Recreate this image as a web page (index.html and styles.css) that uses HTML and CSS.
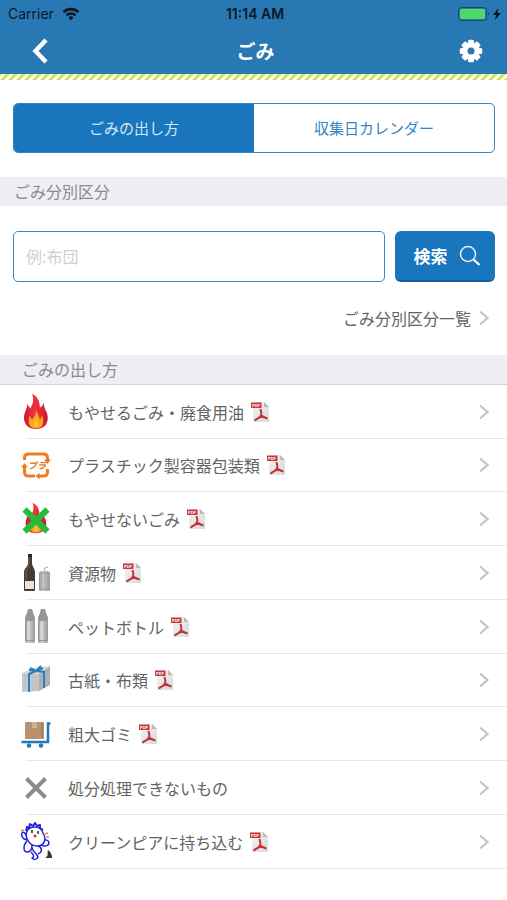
FILE: index.html
```html
<!DOCTYPE html>
<html lang="ja">
<head>
<meta charset="utf-8">
<meta name="viewport" content="width=device-width, initial-scale=1">
<title>ごみ</title>
<link rel="stylesheet" href="styles.css">
</head>
<body>
<svg class="defs" aria-hidden="true">
  <defs>
    <linearGradient id="page" x1="0" y1="0" x2="1" y2="1"><stop offset="0" stop-color="#f4f4f4"/><stop offset="1" stop-color="#d8d9db"/></linearGradient>
    <linearGradient id="steel" x1="0" x2="1" y1="0" y2="0"><stop offset="0" stop-color="#8f8f8f"/><stop offset=".35" stop-color="#d2d2d2"/><stop offset="1" stop-color="#979797"/></linearGradient>
    <linearGradient id="flame-red" x1="0" x2="1" y1="0" y2="0"><stop offset="0" stop-color="#cf1736"/><stop offset=".45" stop-color="#ee3340"/><stop offset="1" stop-color="#cb1735"/></linearGradient>
  </defs>
  <symbol id="chevron" viewBox="0 0 10 16"><path d="M1 1.500l7.500 6.500L1 14.500" fill="none" stroke="#c4c4c6" stroke-width="2.200"/></symbol>
  <symbol id="pdf" viewBox="0 0 20 22">
    <path d="M3 1h11l5 5v15H3z" fill="url(#page)"/>
    <path d="M14 1l5 5h-5z" fill="#b9babd"/>
    <path d="M1 1.500h10.500v5.500H1z" fill="#c9373b"/>
    <path d="M10.500 8c1 3 1 5 .5 6.500-1.500 2-3.500 4-6.500 5M11 14.500c2 1 4 2.500 6.500 3" fill="none" stroke="#c23237" stroke-width="2"/>
    <path d="M5 19.500c1-3 8-4 12-2" fill="none" stroke="#c23237" stroke-width="1.200"/>
  </symbol>
  <symbol id="flame" viewBox="0 0 28 38">
    <path d="M10 1c5 2 8 7 8 14 2-1 3-2 4-5 0 4 1 6 3 10 2 5 1 11-2 14-3 2-5 3-9 3s-7-1-9-3c-4-4-4-10-2-15 1-3 2-4 2-8 1 2 2 3 3 5 3-5 4-9 2-15z" fill="url(#flame-red)"/>
    <path d="M14 18c2 3 3 6 4 9 1-1 2-3 2-5 2 5 2 9 0 12-2 3-10 3-12 0-2-3-2-8 0-11 0 2 1 3 2 4 3-3 4-5 4-9z" fill="#f5a51e"/>
    <path d="M14 25c2 4 4 7 1 10-3 1-5-1-4-4 1-2 3-3 3-6z" fill="#fbb936"/>
  </symbol>
</svg>

<header class="top">
  <div class="status">
    <div class="carrier">Carrier
      <svg width="18" height="14" viewBox="0 0 18 14" aria-hidden="true"><g fill="none" stroke="#0b1826" stroke-width="2.6"><path d="M1.5 5.2a10.6 10.6 0 0 1 15 0"/><path d="M4.5 8.4a6.4 6.4 0 0 1 9 0"/></g><path d="M9 13.2L6.4 10.5a3.7 3.7 0 0 1 5.2 0z" fill="#0b1826"/></svg>
    </div>
    <div class="clock">11:14 AM</div>
    <div class="battery">
      <svg width="44" height="14" viewBox="0 0 44 14" aria-hidden="true"><rect x=".5" y=".5" width="28" height="13" rx="3" fill="none" stroke="#17496f"/><rect x="2" y="2" width="25" height="10" rx="1.5" fill="#4cd964"/><path d="M30 5q2 2 0 4z" fill="#17496f"/><path d="M40.5 1L35 8h3.2L37 13l6-7h-3.5z" fill="#071421"/></svg>
    </div>
  </div>
  <div class="nav">
    <button class="nav-btn" type="button" aria-label="戻る"><svg width="18" height="28" viewBox="0 0 18 28"><path d="M15 3L4.500 14 15 25" fill="none" stroke="#fff" stroke-width="4.500"/></svg></button>
    <h1>ごみ</h1>
    <button class="nav-btn" type="button" aria-label="設定"><svg width="24" height="24" viewBox="-12 -12 24 24"><g fill="#fff"><g id="teeth"><rect x="-3" y="-11.200" width="6" height="22.400" rx="1.500"/><rect x="-3" y="-11.200" width="6" height="22.400" rx="1.500" transform="rotate(90)"/></g><use href="#teeth" transform="rotate(45)"/><circle r="8.800"/></g><circle r="3.500" fill="#2878b4"/></svg></button>
  </div>
  <svg class="stripe" aria-hidden="true"><defs><pattern id="hatch" width="8" height="6" patternUnits="userSpaceOnUse"><rect width="8" height="6" fill="#fff"/><path d="M0 6L6 0h4L4 6zM-8 6l6-6h4l-6 6z" fill="#cbe04a"/></pattern></defs><rect width="100%" height="6" fill="url(#hatch)"/></svg>
</header>

<main>
  <nav class="tabs">
    <a class="tab active" href="#how" aria-current="page">ごみの出し方</a>
    <a class="tab" href="#calendar">収集日カレンダー</a>
  </nav>

  <h2 class="bar"><label for="q">ごみ分別区分</label></h2>
  <form class="search">
    <input id="q" type="text" placeholder="例:布団">
    <button type="submit">検索
      <svg width="22" height="22" viewBox="0 0 22 22" aria-hidden="true"><circle cx="9" cy="9" r="7.500" fill="none" stroke="#e4f1fa" stroke-width="1.500"/><path d="M14.500 14.500l6 5.500" stroke="#fff" stroke-width="2.200"/></svg>
    </button>
  </form>
  <div class="more"><a href="#all">ごみ分別区分一覧 <svg class="chev" aria-hidden="true"><use href="#chevron"/></svg></a></div>

  <h2 class="bar list-head" id="how">ごみの出し方</h2>
  <ul class="list">
    <li><a href="#burn"><svg class="icon" viewBox="0 0 32 40" aria-hidden="true"><use href="#flame" x="2" y="1" width="28" height="37"/></svg><span>もやせるごみ・廃食用油</span><svg class="pdf" viewBox="0 0 20 22"><use href="#pdf"/><text x="6" y="6" class="pdf-label">PDF</text></svg><svg class="chev" aria-hidden="true"><use href="#chevron"/></svg></a></li>
    <li><a href="#plastic"><svg class="icon" viewBox="0 0 32 40" aria-hidden="true"><g fill="none" stroke="#f07a22" stroke-width="3"><path d="M4.500 15v-2q0-4 4-4h15q4 0 4 4v3"/><path d="M27.500 24v3q0 4-4 4h-5"/><path d="M15 31H8.500q-4 0-4-4v-5"/></g><path d="M24 14.500h7l-3.500 4.500zM1 22.500h7L4.500 18zM19.500 28v6.500l-4-3.500z" fill="#f07a22"/><text x="17" y="24" class="pura">プラ</text></svg><span>プラスチック製容器包装類</span><svg class="pdf" viewBox="0 0 20 22"><use href="#pdf"/><text x="6" y="6" class="pdf-label">PDF</text></svg><svg class="chev" aria-hidden="true"><use href="#chevron"/></svg></a></li>
    <li><a href="#nonburn"><svg class="icon" viewBox="0 0 32 40" aria-hidden="true"><use href="#flame" x="3" y="3" width="26" height="32"/><path d="M4.500 10.500l23 22M27.500 10.500l-23 22" stroke="#25bd38" stroke-width="6"/></svg><span>もやせないごみ</span><svg class="pdf" viewBox="0 0 20 22"><use href="#pdf"/><text x="6" y="6" class="pdf-label">PDF</text></svg><svg class="chev" aria-hidden="true"><use href="#chevron"/></svg></a></li>
    <li><a href="#resource"><svg class="icon" viewBox="0 0 32 40" aria-hidden="true"><path d="M8 1h4v9c0 4 3 5 3 9v18q0 1-1 1H5q-1 0-1-1V19c0-4 4-5 4-9z" fill="#463a36"/><path d="M9 4v7c0 4-3 5-3 9v7" fill="none" stroke="#75665f" stroke-width="1"/><path d="M8 1h4v3H8z" fill="#2d2624"/><path d="M5 28h9v8H5z" fill="#e9e4df"/><path d="M19 20l2-2h7l2 2v17l-1 1h-9l-1-1z" fill="url(#steel)"/><path d="M19 20h11M19 36h11" stroke="#9a9a9a"/><path d="M22 21v15M25 21v15M28 21v15" stroke="#aaa"/><path d="M24 18l1-3 3-1" fill="none" stroke="#aaa"/></svg><span>資源物</span><svg class="pdf" viewBox="0 0 20 22"><use href="#pdf"/><text x="6" y="6" class="pdf-label">PDF</text></svg><svg class="chev" aria-hidden="true"><use href="#chevron"/></svg></a></li>
    <li><a href="#pet"><svg class="icon" viewBox="0 0 32 40" aria-hidden="true"><g id="bottle"><path d="M8 2h4l1 4c1 3 2 4 2 7v21q0 2-2 2H7q-2 0-2-2V13c0-3 1-4 2-7z" fill="url(#steel)"/><path d="M8 2h4l1 4c1 3 2 4 2 7H5c0-3 1-4 2-7z" fill="#969696"/><path d="M6 13.500h8M6 33.500h8" stroke="#999"/><path d="M8.500 15v17" stroke="#dcdcdc" stroke-width="2"/></g><use href="#bottle" x="13"/></svg><span>ペットボトル</span><svg class="pdf" viewBox="0 0 20 22"><use href="#pdf"/><text x="6" y="6" class="pdf-label">PDF</text></svg><svg class="chev" aria-hidden="true"><use href="#chevron"/></svg></a></li>
    <li><a href="#paper"><svg class="icon" viewBox="0 0 32 40" aria-hidden="true"><path d="M2 13l11-5 17-2-11 8z" fill="#d9d9d9"/><path d="M2 13l17 1v17l-17 1z" fill="#c6c7c8"/><path d="M19 14l11-8v19l-11 6z" fill="#acaeaf"/><path d="M5 14v17M13 14v17M16 14v17M22 12v17M28 8v17" stroke="#bcbdbe" stroke-width=".7"/><path d="M9 32V14l14-6M9 10l15 2v16M10 8l6 3 5-5" fill="none" stroke="#2c7fbd" stroke-width="2"/></svg><span>古紙・布類</span><svg class="pdf" viewBox="0 0 20 22"><use href="#pdf"/><text x="6" y="6" class="pdf-label">PDF</text></svg><svg class="chev" aria-hidden="true"><use href="#chevron"/></svg></a></li>
    <li><a href="#large"><svg class="icon" viewBox="0 0 32 40" aria-hidden="true"><rect x="5" y="8" width="19" height="17" rx="1" fill="#b9926f"/><path d="M12 8h5v6h-5z" fill="#cfb091"/><path d="M22 9v15" stroke="#a8825f" stroke-width="2"/><path d="M1.500 28h26.500V9.500h2.500" fill="none" stroke="#2479b9" stroke-width="2.500"/><circle cx="9" cy="31.500" r="2.300" fill="#2479b9"/><circle cx="21" cy="31.500" r="2.300" fill="#2479b9"/></svg><span>粗大ゴミ</span><svg class="pdf" viewBox="0 0 20 22"><use href="#pdf"/><text x="6" y="6" class="pdf-label">PDF</text></svg><svg class="chev" aria-hidden="true"><use href="#chevron"/></svg></a></li>
    <li><a href="#not-accepted"><svg class="icon" viewBox="0 0 32 40" aria-hidden="true"><path d="M6.500 10.500l19 19M25.500 10.500l-19 19" stroke="#8a8c8e" stroke-width="4"/></svg><span>処分処理できないもの</span><svg class="chev" aria-hidden="true"><use href="#chevron"/></svg></a></li>
    <li><a href="#cleanpia"><svg class="icon" viewBox="0 0 32 40" aria-hidden="true"><path d="M25 36c4-2 2-5 3-8 3 2 4 5 4 8z" fill="#333"/><g fill="#fff" stroke="#2323dd" stroke-width="1.500" stroke-linejoin="round"><path d="M7 18c-5-1-6-5-5-7s3 0 5 3M21 19c5-2 8-1 8 2s-5 4-8 2"/><path d="M7 19c-4 4-4 11 0 11s5-4 5-7M12 24c-1 5 5 7 6 11-1 3-5 3-6 1 3-1 1-4-1-6M18 24c4 1 5 6 0 8"/><path d="M7 9c4-6 14-5 16 2 4 7 1 13-6 13S4 16 7 9z"/><path d="M6 9l1-4 2 1 1-4 3 2 2-3 2 3 3-1v3l3 2" fill="none" stroke-width="2"/></g><path d="M12 8v3M18 9v3" stroke="#222" stroke-width="1.500"/><circle cx="15" cy="14" r="1.500" fill="#e02a3a"/><path d="M1 9l3-1M25 12l3-1M26 15l3 0" stroke="#ef8068" stroke-width="1.500"/></svg><span>クリーンピアに持ち込む</span><svg class="pdf" viewBox="0 0 20 22"><use href="#pdf"/><text x="6" y="6" class="pdf-label">PDF</text></svg><svg class="chev" aria-hidden="true"><use href="#chevron"/></svg></a></li>
  </ul>
</main>
</body>
</html>
```
FILE: styles.css
```css
* { box-sizing: border-box; }

body {
  margin: 0;
  background: #fff;
  color: #646464;
  font: 16px/24px "Noto Sans CJK JP", sans-serif;
}

a { color: inherit; text-decoration: none; }
svg { display: block; flex: none; }
.defs { position: absolute; width: 0; height: 0; }

.top { background: #2878b4; }

.status {
  display: grid;
  grid-template-columns: 1fr auto 1fr;
  align-items: center;
  height: 28px;
  padding: 0 5px 0 8px;
  color: #0b1826;
  font: 14px/20px Inter, sans-serif;
}
.carrier { display: flex; align-items: center; gap: 8px; }
.clock { font-weight: 600; }
.battery { justify-self: end; }

.nav {
  display: flex;
  align-items: center;
  justify-content: space-between;
  height: 46px;
  padding: 0 20px 0 24px;
}
.nav-btn {
  display: flex;
  align-items: center;
  justify-content: center;
  width: 32px;
  height: 40px;
  padding: 0;
  border: 0;
  background: none;
}
.nav h1 { margin: 0; color: #fff; font-size: 19px; line-height: 24px; font-weight: 700; }
.stripe { width: 100%; height: 6px; }

.tabs {
  display: flex;
  margin: 23px 12px 24px 13px;
  border: 1px solid #3485c2;
  border-radius: 5px;
  overflow: hidden;
}
.tab {
  flex: 1;
  color: #3485c2;
  font-size: 15px;
  line-height: 48px;
  text-align: center;
}
.tab.active { background: #1a76bc; color: #d4e8f7; }

.bar {
  margin: 0;
  padding: 0 14px;
  background: #eeeef3;
  color: #8a8a8f;
  font-size: 16px;
  line-height: 29px;
  font-weight: 400;
}
.list-head { padding: 0 22px; border-bottom: 1px solid #d3d3d6; }

.search { display: flex; gap: 10px; padding: 25px 12px 0 13px; }
.search input {
  flex: 1;
  min-width: 0;
  height: 51px;
  padding: 0 12px 2px;
  border: 1px solid #3c88c4;
  border-radius: 5px;
  background: #fff;
  color: #646464;
  font: inherit;
}
.search input::placeholder { color: #cfcfd2; opacity: 1; }
.search button {
  display: flex;
  align-items: center;
  justify-content: center;
  gap: 11px;
  width: 100px;
  height: 51px;
  padding: 0 0 0 4px;
  border: 0;
  border-bottom: 2px solid #10609f;
  border-radius: 6px;
  background: #1a76bc;
  color: #fff;
  font: 700 17px/24px "Noto Sans CJK JP", sans-serif;
}

.more { display: flex; justify-content: flex-end; padding: 24px 18px 25px; }
.more a { display: flex; align-items: center; gap: 8px; }
.chev { width: 10px; height: 16px; }

.list { margin: 0; padding: 0; list-style: none; }
.list li { margin-left: 26px; height: 54px; border-bottom: 1px solid #e6e6e8; }
.list li:nth-child(4n + 2) { height: 53px; }
.list a {
  display: flex;
  align-items: center;
  height: 100%;
  margin-left: -6px;
  padding-right: 18px;
}
.icon { width: 32px; height: 40px; margin-right: 16px; }
.pdf { width: 20px; height: 22px; margin-left: 6px; }
.list .chev { margin-left: auto; }

.pdf-label { fill: #fff; font: 700 4px "Liberation Sans", sans-serif; text-anchor: middle; }
.pura { fill: #f07a22; font: italic 900 9px "Noto Sans CJK JP", sans-serif; text-anchor: middle; }
```
